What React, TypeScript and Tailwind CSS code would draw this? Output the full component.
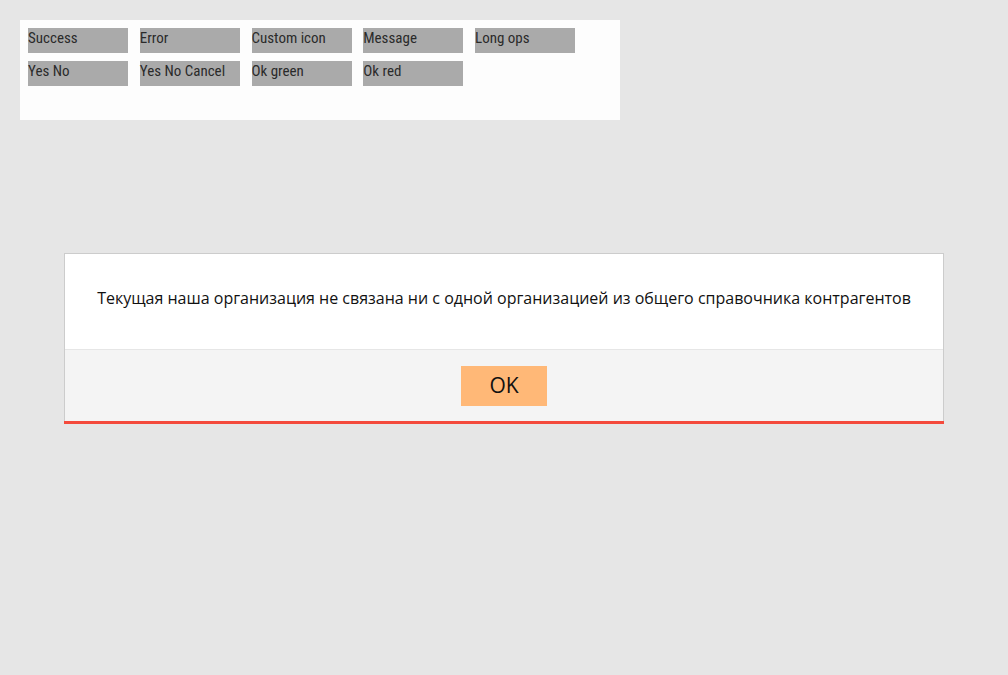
import React from "react";

const BUTTONS = [
	["Success", "Error", "Custom icon", "Message", "Long ops"],
	["Yes No", "Yes No Cancel", "Ok green", "Ok red"],
];

export default function App() {
	return (
		<div className="relative min-h-screen bg-[#e6e6e6] p-5">
			{/* Demo buttons panel */}
			<div className="flex h-[100px] w-[600px] flex-col gap-2 bg-[#fdfdfd] p-2">
				{BUTTONS.map((row, i) => (
					<div key={i} className="flex gap-[11.75px]">
						{row.map((label) => (
							<button
								key={label}
								type="button"
								className="h-[25px] w-[100px] self-start bg-[#aaaaaa] pb-[6px] text-left text-[15px] font-normal leading-[18px] text-[#2a2a2a] [font-family:'Liberation_Sans_Narrow','Roboto_Condensed',sans-serif]"
							>
								{label}
							</button>
						))}
					</div>
				))}
			</div>

			{/* Modal */}
			<div className="fixed inset-0 flex items-center justify-center">
				<div className="mt-px w-[880px] border border-b-0 border-[#cccccc] bg-white [font-family:'Open_Sans',sans-serif]">
					<div className="flex h-[95px] items-center justify-center pb-[6px] text-[16px] text-[#111]">
						Текущая наша организация не связана ни с одной организацией из общего справочника контрагентов
					</div>
					<div className="flex h-[72px] items-start justify-center border-t border-[#e6e6e6] bg-[#f4f4f4] pt-4">
						<button
							type="button"
							className="h-10 w-[86px] bg-[#ffb877] text-[21px] text-[#111]"
						>
							OK
						</button>
					</div>
					<div className="-mx-px h-[3px] bg-[#f44a3c]" />
				</div>
			</div>
		</div>
	);
}
